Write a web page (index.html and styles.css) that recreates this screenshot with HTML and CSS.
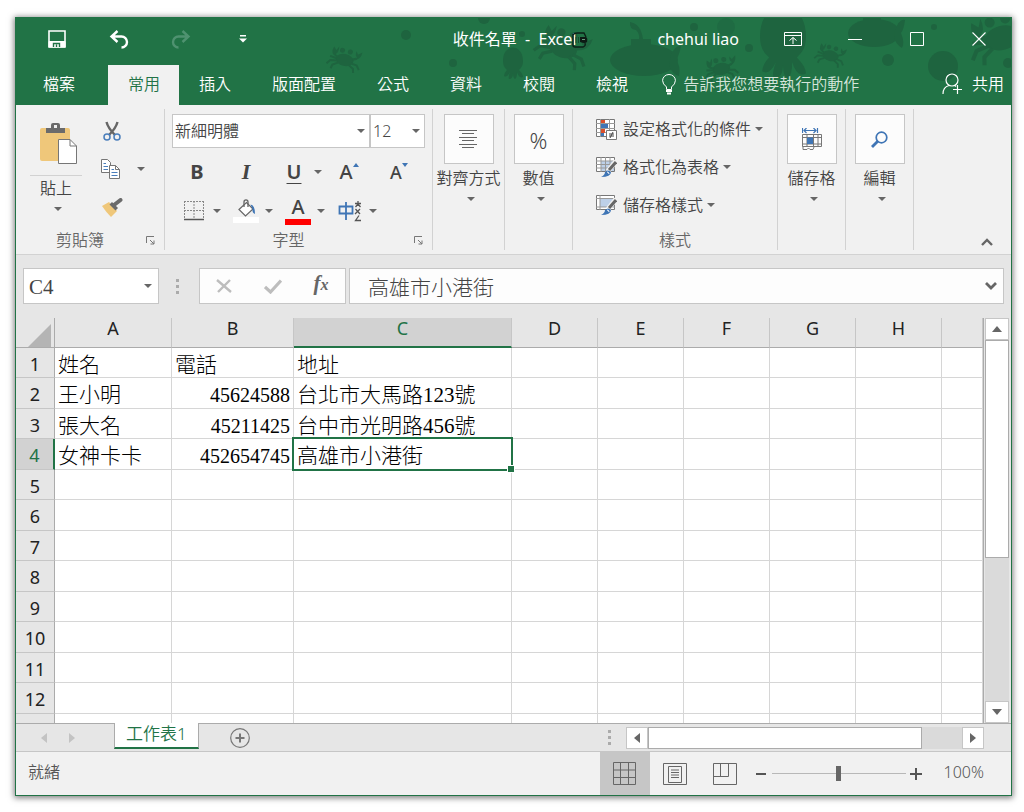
FILE: index.html
```html
<!DOCTYPE html>
<html lang="zh-Hant">
<head>
<meta charset="utf-8">
<meta name="viewport" content="width=device-width, initial-scale=1">
<title>收件名單 - Excel</title>
<link rel="stylesheet" href="styles.css">
</head>
<body>
<div class="window">
  <header class="header">
    <svg class="sea" viewBox="16 18 996 87" width="996" height="87" aria-hidden="true">
      <defs>
        <g id="crab">
          <ellipse cx="0" cy="2" rx="9" ry="6"/>
          <circle cx="-4" cy="-7" r="2.5"/><circle cx="4" cy="-7" r="2.5"/>
          <path d="M-8 1Q-16-1-13-9L-10-6-8-10Q-7-4-10-2L-6 0ZM8 1Q16-1 16-9L12-6 10-9Q9-4 12-3L7-1Z"/>
          <path d="M-7 4-14 5-17 9M-6 6-11 9-12 13M7 4 13 5 16 9M5 6 10 9 11 13M-8 2-15 1" fill="none" stroke="#1e643f" stroke-width="2"/>
        </g>
        <g id="squid">
          <path d="M-10-4C-10-22 10-22 10-4C10 1 8 3 6 5Q10 9 10 12 6 14 4 7Q4 13 2 14 0 13 0 8 0 14-4 14-5 12-3 7-6 13-9 11-9 8-6 5-10 2-10-4Z"/>
        </g>
      </defs>
      <g fill="#1e643f">
        <use href="#crab" transform="translate(346 58) rotate(12)"/>
        <use href="#crab" transform="translate(565 45) rotate(18) scale(1.6)"/>
        <use href="#crab" transform="translate(722 67) rotate(-10)"/>
        <use href="#crab" transform="translate(832 54) rotate(14) scale(.9)"/>
        <use href="#crab" transform="translate(1002 34) rotate(-15) scale(2)"/>
        <use href="#squid" transform="translate(514 65)"/>
        <use href="#squid" transform="translate(784 46) scale(2.3)"/>
        <circle cx="407" cy="35" r="5"/><circle cx="485" cy="18" r="6"/>
        <circle cx="523" cy="34" r="3"/><circle cx="454" cy="63" r="4"/>
        <circle cx="695" cy="27" r="4"/><circle cx="727" cy="27" r="9" opacity=".5"/>
        <circle cx="750" cy="48" r="4"/><circle cx="889" cy="60" r="6"/>
        <circle cx="935" cy="27" r="3"/><circle cx="944" cy="66" r="15"/><circle cx="1009" cy="63" r="5"/>
        <ellipse cx="645" cy="60" rx="34" ry="16"/>
        <path d="M632 46V39H640Q641 34 637 30Q630 29 631 22Q642 24 644 39H652V46ZM672 55Q676 45 682 46 680 56 677 60 682 66 680 76 674 75 670 66Z"/>
        <ellipse cx="875" cy="33" rx="26" ry="14"/>
        <path d="M864 22V18H882V22ZM896 31Q900 18 906 20 905 29 902 33 906 43 903 48 896 44 895 36Z"/>
      </g>
    </svg>

    <div class="titlebar">
      <div class="quick">
        <button class="tb-btn" type="button" aria-label="儲存檔案">
          <svg width="18" height="18" viewBox="0 0 18 18" fill="none" stroke="#fff"><path d="M1 1H17V17H1Z" stroke-width="1.6"/><path d="M1 11.5H17V17H1Z" fill="#fff"/><path d="M5.500 17V13.500H11.500V17M8.500 14.500V17" stroke="#217346" stroke-width="1.400"/></svg>
        </button>
        <button class="tb-btn" type="button" aria-label="復原">
          <svg width="20" height="19" viewBox="0 0 20 19" fill="none" stroke="#fff" stroke-width="2.400"><path d="M8.500 1 2.500 6.500 8.500 12M2.500 6.500H12.500A5.300 5.300 0 0 1 12.500 17.500"/></svg>
        </button>
        <button class="tb-btn" type="button" aria-label="取消復原" disabled>
          <svg width="20" height="19" viewBox="0 0 20 19" fill="none" stroke="#4f9270" stroke-width="2.400"><path d="M11.500 1 17.500 6.500 11.500 12M17.500 6.500H7.500A5.300 5.300 0 0 0 7.500 17.500"/></svg>
        </button>
        <button class="tb-btn" type="button" aria-label="自訂快速存取工具列">
          <svg width="8" height="8" viewBox="0 0 8 8"><path d="M1 0H7V1.500H1ZM0 3.500H8L4 7.500Z" fill="#fff"/></svg>
        </button>
      </div>
      <div class="doc-title">收件名單&nbsp; -&nbsp; Exce<span class="busy">l<svg width="16" height="16" viewBox="0 0 16 16" aria-hidden="true"><path d="M1 2V13Q1 15 3 15H11Q14 14 13 11M1 3Q2 1 5 1H12L14 5" fill="none" stroke="#0d2118" stroke-width="1.4"/><path d="M4 5V11M6.500 5V11" stroke="#174a30"/><path d="M8 5H14Q16 6 15 10 13 12 8 10Z" fill="#0d1a14"/><path d="M10 7.500H13" stroke="#6b9a80"/></svg></span></div>
      <div class="user">chehui liao</div>
      <div class="win-btns">
        <button class="tb-btn" type="button" aria-label="功能區顯示選項">
          <svg width="18" height="14" viewBox="0 0 18 14" fill="none" stroke="#fff"><path d="M.5.5H17.500V13.500H.5ZM.5 3.500H17.500M9 12V5.500M5.500 8.500 9 5.500 12.500 8.500"/></svg>
        </button>
        <button class="tb-btn" type="button" aria-label="最小化">
          <svg width="14" height="14" viewBox="0 0 14 14"><path d="M0 7.500H14" stroke="#fff"/></svg>
        </button>
        <button class="tb-btn" type="button" aria-label="最大化">
          <svg width="14" height="14" viewBox="0 0 14 14"><path d="M.5.5H13.500V13.500H.5Z" fill="none" stroke="#fff"/></svg>
        </button>
        <button class="tb-btn" type="button" aria-label="關閉">
          <svg width="14" height="14" viewBox="0 0 14 14"><path d="M.5.5 13.500 13.500M13.500.5.5 13.500" stroke="#fff" stroke-width="1.100"/></svg>
        </button>
      </div>
    </div>

    <nav class="tabs">
      <button class="tab tab-file" type="button">檔案</button>
      <button class="tab tab-active" type="button">常用</button>
      <button class="tab" type="button">插入</button>
      <button class="tab" type="button">版面配置</button>
      <button class="tab" type="button">公式</button>
      <button class="tab" type="button">資料</button>
      <button class="tab" type="button">校閱</button>
      <button class="tab" type="button">檢視</button>
      <button class="tell" type="button">
        <svg width="14" height="21" viewBox="0 0 14 21" fill="none" stroke="#fff"><path d="M4.500 15.500V13Q.6 10 .6 6.500A6.400 6 0 0 1 13.400 6.500Q13.400 10 9.500 13V15.500Z"/><path d="M4 17H10M5 19.500H9" stroke-width="2"/></svg>
        <span>告訴我您想要執行的動作</span>
      </button>
      <button class="share" type="button">
        <svg width="20" height="22" viewBox="0 0 20 22" fill="none" stroke="#fff" stroke-width="1.200"><circle cx="10" cy="7" r="6"/><path d="M1 21Q1 14 7 12.500M13 12.500 14 13.500M11 16.500H20M15.500 12V21"/></svg>
        <span>共用</span>
      </button>
    </nav>
  </header>

  <section class="ribbon" aria-label="常用">
    <div class="group g-clip">
      <div class="clip-body">
        <button class="paste" type="button">
          <svg width="38" height="42" viewBox="0 0 38 42"><path d="M2 5H28Q30 5 30 7V38H2Q0 38 0 36V7Q0 5 2 5Z" fill="#efc77a"/><path d="M6 5H11V2Q11 0 13 0H18Q20 0 20 2V5H25V10H6Z" fill="#6b6b6b"/><rect x="14" y="2" width="3" height="3" fill="#f1f1f1"/><path d="M18.500 16.500H30L36.500 23V40.500H18.500Z" fill="#fff" stroke="#767676"/><path d="M30 16.500V23H36.500" fill="none" stroke="#767676"/></svg>
          <span class="rule"></span>
          <span>貼上</span>
          <i class="arrow"></i>
        </button>
        <div class="clip-tools">
          <button class="icon-btn" type="button" aria-label="剪下">
            <svg width="18" height="20" viewBox="0 0 18 20" fill="none"><path d="M3.500 1Q5 7 12 14M14.500 1Q13 7 6 14" stroke="#666" stroke-width="2.400"/><circle cx="4" cy="16" r="3" stroke="#4a7ebb" stroke-width="1.500"/><circle cx="14" cy="16" r="3" stroke="#4a7ebb" stroke-width="1.500"/></svg>
          </button>
          <button class="icon-btn" type="button" aria-label="複製">
            <svg width="19" height="20" viewBox="0 0 19 20"><g fill="#fff" stroke="#767676"><path d="M.5.5H6.500L9.500 3.500V13.500H.5Z"/><path d="M8.500 6.500H14.500L18.500 10.500V19.500H8.500Z"/><path d="M14.500 6.500V10.500H18.500" fill="none"/></g><path d="M2.500 4.500H5M2.500 7.500H7M2.500 10.500H7M10.500 10.500H13M10.500 13.500H16.500M10.500 16.500H16.500" stroke="#4a7ebb"/></svg>
          </button>
          <button class="arrow-btn" type="button" aria-label="複製選項"><i class="arrow"></i></button>
          <button class="icon-btn painter" type="button" aria-label="複製格式">
            <svg width="21" height="19" viewBox="0 0 21 19"><path d="M0 8 7 4 15 13 9 19Q4 14 0 8Z" fill="#efc77a"/><path d="M7.500 6.500 10 4 16 10 13.500 12.500Z" fill="#6b6b6b"/><path d="M12 7 18.500 2" stroke="#6b6b6b" stroke-width="4" stroke-linecap="round"/></svg>
          </button>
        </div>
      </div>
      <div class="group-label"><span>剪貼簿</span>
        <button class="launcher" type="button" aria-label="剪貼簿設定"><svg width="9" height="9" viewBox="0 0 9 9" fill="none" stroke="#777"><path d="M.5 7V.5H8M4 4 8 8M8 4.500V8H4.500"/></svg></button>
      </div>
    </div>

    <div class="group g-font">
      <div class="font-row combos">
        <div class="combo combo-name"><select aria-label="字型"><option>新細明體</option></select></div>
        <div class="combo combo-size"><select aria-label="字型大小"><option>12</option></select></div>
      </div>
      <div class="font-row styles-row">
        <button class="glyph bold" type="button" aria-label="粗體">B</button>
        <button class="glyph italic" type="button" aria-label="斜體">I</button>
        <button class="glyph underline" type="button" aria-label="底線">U</button>
        <button class="arrow-btn" type="button" aria-label="底線選項"><i class="arrow"></i></button>
        <button class="glyph grow" type="button" aria-label="放大字型">A<svg width="6" height="4" viewBox="0 0 6 4"><path d="M0 4 3 0 6 4Z" fill="#3f75b5"/></svg></button>
        <button class="glyph shrink" type="button" aria-label="縮小字型">A<svg width="6" height="4" viewBox="0 0 6 4"><path d="M0 0 3 4 6 0Z" fill="#3f75b5"/></svg></button>
      </div>
      <div class="font-row color-row">
        <div class="split">
          <button class="icon-btn" type="button" aria-label="框線"><svg width="20" height="20" viewBox="0 0 20 20" fill="none" stroke="#888"><path d="M.5 0V18M10 0V18M19.500 0V18M0 .5H20M0 9.500H20" stroke-dasharray="2 1"/><path d="M0 18.500H20" stroke="#555" stroke-width="1.500"/></svg></button>
          <button class="arrow-btn" type="button" aria-label="框線選項"><i class="arrow"></i></button>
        </div>
        <div class="split">
          <button class="icon-btn" type="button" aria-label="填滿色彩"><svg width="26" height="24" viewBox="0 0 26 24"><path d="M6 10.500 13.500 3.500 20 10 12.500 17Z" fill="#fff" stroke="#666" stroke-width="1.200"/><path d="M11 8V3Q11 .8 13 .8T15 3V8" fill="none" stroke="#666" stroke-width="1.300"/><path d="M17.500 5.500Q22 6 22 15Q19 14 19.500 10Z" fill="#3f75b5"/><path d="M0 18H26V24H0Z" fill="#fff"/></svg></button>
          <button class="arrow-btn" type="button" aria-label="填滿色彩選項"><i class="arrow"></i></button>
        </div>
        <div class="split">
          <button class="glyph font-color" type="button" aria-label="字型色彩">A</button>
          <button class="arrow-btn" type="button" aria-label="字型色彩選項"><i class="arrow"></i></button>
        </div>
        <div class="split">
          <button class="icon-btn" type="button" aria-label="顯示注音標示"><svg width="24" height="22" viewBox="0 0 24 22" fill="none"><path d="M1.500 6.500H14.500V13.500H1.500ZM8 2V20" stroke="#3f75b5" stroke-width="1.800"/><path d="M17 3.500H23M20 1V6M17.500 7 20 4 22.500 7M17.500 9 22 14M22 9 17 14M21 15.500 17.500 20.500H23" stroke="#555" stroke-width="1.300"/></svg></button>
          <button class="arrow-btn" type="button" aria-label="注音選項"><i class="arrow"></i></button>
        </div>
      </div>
      <div class="group-label"><span>字型</span>
        <button class="launcher" type="button" aria-label="字型設定"><svg width="9" height="9" viewBox="0 0 9 9" fill="none" stroke="#777"><path d="M.5 7V.5H8M4 4 8 8M8 4.500V8H4.500"/></svg></button>
      </div>
    </div>

    <div class="group g-align">
      <button class="big" type="button">
        <span class="tile"><svg width="19" height="20" viewBox="0 0 19 20" stroke="#666"><path d="M0 1.500H18M3 4.500H15M0 8.500H18M3 11.500H15M0 15.500H18M3 18.500H15"/></svg></span>
        <span>對齊方式</span><i class="arrow"></i>
      </button>
    </div>
    <div class="group g-small">
      <button class="big" type="button">
        <span class="tile percent">%</span>
        <span>數值</span><i class="arrow"></i>
      </button>
    </div>

    <div class="group g-styles">
      <div class="style-list">
        <button class="style-item" type="button">
          <svg width="21" height="22" viewBox="0 0 21 22"><path d="M.5 1.500H18.500V18.500H.5Z" fill="#fff" stroke="#777"/><path d="M4.500 1V19M13.500 1V19M0 5.500H19M0 10.500H19M0 14.500H19" stroke="#999" fill="none"/><path d="M5 2H9V5H5ZM5 11H9V15H5Z" fill="#d94f2b"/><path d="M5 6H12V10H5ZM5 15H8V18H5Z" fill="#3f75b5"/><path d="M10.500 12.500H20.500V21.500H10.500Z" fill="#fff" stroke="#777"/><path d="M13 16H18M13 18H18M17 14 14 20" stroke="#444"/></svg>
          <span>設定格式化的條件</span><i class="arrow"></i>
        </button>
        <button class="style-item" type="button">
          <svg width="21" height="22" viewBox="0 0 21 22"><path d="M.5 1.500H18.500V15.500H.5Z" fill="#fff" stroke="#777"/><path d="M5 5H18V15H5Z" fill="#bdd0e8"/><path d="M5 1V16M9.500 1V16M14 1V16M0 5H19M0 8.500H19M0 12H19" stroke="#999"/><path d="M20 5 12 15" stroke="#f1f1f1" stroke-width="5"/><path d="M20 6 13 14" stroke="#666" stroke-width="3"/><path d="M5 21Q9 19 9 16 12 13 15 16 15 21 5 21Z" fill="#3f75b5"/><path d="M11 16Q13 16 13 18" fill="none" stroke="#fff"/></svg>
          <span>格式化為表格</span><i class="arrow"></i>
        </button>
        <button class="style-item" type="button">
          <svg width="21" height="22" viewBox="0 0 21 22"><path d="M.5 1.500H18.500V15.500H.5Z" fill="#fff" stroke="#777"/><path d="M4 5H18V13H4Z" fill="#bdd0e8"/><path d="M4 1V16M0 4.500H19M0 13H19" stroke="#999"/><path d="M20 5 12 15" stroke="#f1f1f1" stroke-width="5"/><path d="M20 6 13 14" stroke="#666" stroke-width="3"/><path d="M5 21Q9 19 9 16 12 13 15 16 15 21 5 21Z" fill="#3f75b5"/><path d="M11 16Q13 16 13 18" fill="none" stroke="#fff"/></svg>
          <span>儲存格樣式</span><i class="arrow"></i>
        </button>
      </div>
      <div class="group-label plain"><span>樣式</span></div>
    </div>

    <div class="group g-small">
      <button class="big" type="button">
        <span class="tile"><svg width="20" height="22" viewBox="0 0 20 22" fill="none"><path d="M.5 0V5M15.500 0V5M2 2.500H14M4.500 0 2 2.500 4.500 5M11.500 0 14 2.500 11.500 5" stroke="#3f75b5" stroke-width="1.200"/><path d="M.5 6.500H19.500V18.500H.5ZM5 6V18M11.500 6V18M16 6V18M0 9.500H20M0 16H20M1 18V21.500H5L6.500 20 8 21.500H11L12 19" stroke="#777"/><path d="M5 9.500H11V16H5Z" fill="#3f75b5"/></svg></span>
        <span>儲存格</span><i class="arrow"></i>
      </button>
    </div>
    <div class="group g-small">
      <button class="big" type="button">
        <span class="tile"><svg width="17" height="17" viewBox="0 0 17 17" fill="none" stroke="#3f75b5"><circle cx="10.500" cy="6.500" r="5.300" stroke-width="1.700"/><path d="M7 10 1 16" stroke-width="2.800"/></svg></span>
        <span>編輯</span><i class="arrow"></i>
      </button>
    </div>
    <button class="collapse" type="button" aria-label="摺疊功能區"><svg width="12" height="8" viewBox="0 0 12 8"><path d="M1 7 6 2 11 7" fill="none" stroke="#666" stroke-width="2.400"/></svg></button>
  </section>

  <section class="formula-bar">
    <div class="combo namebox"><input type="text" value="C4" aria-label="名稱方塊"></div>
    <svg class="dots" width="3" height="15" viewBox="0 0 3 15" aria-hidden="true"><path d="M0 0H3V3H0ZM0 6H3V9H0ZM0 12H3V15H0Z" fill="#ababab"/></svg>
    <div class="fx-box">
      <button class="icon-btn" type="button" aria-label="取消"><svg width="16" height="14" viewBox="0 0 16 14"><path d="M1 1 15 13M14 1 2 13" stroke="#bdbdbd" stroke-width="2.400"/></svg></button>
      <button class="icon-btn" type="button" aria-label="輸入"><svg width="18" height="15" viewBox="0 0 18 15"><path d="M1 8 6.500 13 17 1.500" fill="none" stroke="#bdbdbd" stroke-width="3.200"/></svg></button>
      <button class="icon-btn fx" type="button" aria-label="插入函數">f<small>x</small></button>
    </div>
    <div class="formula">
      <input type="text" value="高雄市小港街" aria-label="資料編輯列">
      <button class="icon-btn" type="button" aria-label="展開資料編輯列"><svg width="12" height="8" viewBox="0 0 12 8"><path d="M1 1 6 6 11 1" fill="none" stroke="#666" stroke-width="2.800"/></svg></button>
    </div>
  </section>

  <main class="sheet">
    <table class="grid">
      <colgroup><col class="c-head"><col class="c-a"><col class="c-b"><col class="c-c"><col class="c-d"><col class="c-d"><col class="c-d"><col class="c-d"><col class="c-d"><col></colgroup>
      <thead>
        <tr><th class="corner"><svg width="23" height="23" viewBox="0 0 23 23" aria-hidden="true"><path d="M23 0V23H0Z" fill="#b4b4b4"/></svg></th><th>A</th><th>B</th><th class="on">C</th><th>D</th><th>E</th><th>F</th><th>G</th><th>H</th><th></th></tr>
      </thead>
      <tbody>
        <tr><th>1</th><td>姓名</td><td>電話</td><td>地址</td><td></td><td></td><td></td><td></td><td></td><td></td></tr>
        <tr><th>2</th><td>王小明</td><td class="num">45624588</td><td>台北市大馬路123號</td><td></td><td></td><td></td><td></td><td></td><td></td></tr>
        <tr><th>3</th><td>張大名</td><td class="num">45211425</td><td>台中市光明路456號</td><td></td><td></td><td></td><td></td><td></td><td></td></tr>
        <tr><th class="on">4</th><td>女神卡卡</td><td class="num">452654745</td><td class="selected">高雄市小港街</td><td></td><td></td><td></td><td></td><td></td><td></td></tr>
        <tr><th>5</th><td></td><td></td><td></td><td></td><td></td><td></td><td></td><td></td><td></td></tr>
        <tr><th>6</th><td></td><td></td><td></td><td></td><td></td><td></td><td></td><td></td><td></td></tr>
        <tr><th>7</th><td></td><td></td><td></td><td></td><td></td><td></td><td></td><td></td><td></td></tr>
        <tr><th>8</th><td></td><td></td><td></td><td></td><td></td><td></td><td></td><td></td><td></td></tr>
        <tr><th>9</th><td></td><td></td><td></td><td></td><td></td><td></td><td></td><td></td><td></td></tr>
        <tr><th>10</th><td></td><td></td><td></td><td></td><td></td><td></td><td></td><td></td><td></td></tr>
        <tr><th>11</th><td></td><td></td><td></td><td></td><td></td><td></td><td></td><td></td><td></td></tr>
        <tr><th>12</th><td></td><td></td><td></td><td></td><td></td><td></td><td></td><td></td><td></td></tr>
        <tr class="cut"><th></th><td></td><td></td><td></td><td></td><td></td><td></td><td></td><td></td><td></td></tr>
      </tbody>
    </table>
    <div class="vscroll">
      <button class="scroll-btn" type="button" aria-label="向上捲動"><svg width="10" height="6" viewBox="0 0 10 6"><path d="M0 6 5 0 10 6Z" fill="#666"/></svg></button>
      <div class="vthumb"></div>
      <div class="track"></div>
      <button class="scroll-btn" type="button" aria-label="向下捲動"><svg width="10" height="6" viewBox="0 0 10 6"><path d="M0 0 5 6 10 0Z" fill="#666"/></svg></button>
    </div>
  </main>

  <section class="sheet-bar">
    <button class="sheet-nav" type="button" aria-label="上一張" disabled><svg width="6" height="10" viewBox="0 0 6 10"><path d="M6 0V10L0 5Z" fill="#c3c3c3"/></svg></button>
    <button class="sheet-nav" type="button" aria-label="下一張" disabled><svg width="6" height="10" viewBox="0 0 6 10"><path d="M0 0V10L6 5Z" fill="#c3c3c3"/></svg></button>
    <button class="sheet-tab" type="button">工作表1</button>
    <button class="add-sheet" type="button" aria-label="新增工作表"><svg width="20" height="20" viewBox="0 0 20 20" fill="none" stroke="#777"><circle cx="10" cy="10" r="9.300" stroke-width="1.200"/><path d="M5.500 10H14.500M10 5.500V14.500" stroke-width="2"/></svg></button>
    <svg class="dots hdots" width="3" height="15" viewBox="0 0 3 15" aria-hidden="true"><path d="M0 0H3V3H0ZM0 6H3V9H0ZM0 12H3V15H0Z" fill="#ababab"/></svg>
    <div class="hscroll">
      <button class="scroll-btn" type="button" aria-label="向左捲動"><svg width="6" height="10" viewBox="0 0 6 10"><path d="M6 0V10L0 5Z" fill="#666"/></svg></button>
      <div class="hthumb"></div>
      <div class="track"></div>
      <button class="scroll-btn" type="button" aria-label="向右捲動"><svg width="6" height="10" viewBox="0 0 6 10"><path d="M0 0V10L6 5Z" fill="#666"/></svg></button>
    </div>
  </section>

  <footer class="status">
    <span class="ready">就緒</span>
    <button class="view view-on" type="button" aria-label="標準模式"><svg width="23" height="23" viewBox="0 0 23 23"><path d="M.5.5H22.500V22.500H.5ZM7.500 0V23M15.500 0V23M0 8H23M0 15.500H23" fill="none" stroke="#666"/></svg></button>
    <button class="view" type="button" aria-label="整頁模式"><svg width="24" height="22" viewBox="0 0 24 22" fill="none" stroke="#666"><path d="M.5.5H23.500V21.500H.5ZM5.500 3.500H18.500V19.500H5.500ZM8 7H16M8 9.500H16M8 12H16M8 14.500H16"/></svg></button>
    <button class="view" type="button" aria-label="分頁預覽"><svg width="24" height="22" viewBox="0 0 24 22" fill="none" stroke="#666"><path d="M.5.5H23.500V21.500H.5ZM7.500 0V13.500M15.500 0V13.500H0"/></svg></button>
    <div class="zoom">
      <button class="icon-btn" type="button" aria-label="縮小"><svg width="12" height="12" viewBox="0 0 12 12"><path d="M1 6H11" stroke="#555" stroke-width="2"/></svg></button>
      <input class="slider" type="range" min="0" max="100" value="50" aria-label="顯示比例">
      <button class="icon-btn" type="button" aria-label="放大"><svg width="12" height="12" viewBox="0 0 12 12"><path d="M0 6H12M6 0V12" stroke="#555" stroke-width="2"/></svg></button>
    </div>
    <span class="percent-text">100%</span>
  </footer>
</div>
</body>
</html>
```

FILE: styles.css
```css
* { box-sizing: border-box; }

body {
  margin: 0;
  padding: 17px 12px 17px 15px;
  background: #fff;
  color: #444;
  font: 350 16px/20px "Noto Sans", "Noto Sans CJK TC", sans-serif;
}

button, input, select {
  margin: 0;
  padding: 0;
  border: 0;
  background: none;
  color: inherit;
  font: inherit;
}

button { display: flex; align-items: center; justify-content: center; }
svg { display: block; flex: none; }

.window {
  border: 1px solid #217346;
  background: #e6e6e6;
  box-shadow: 0 1px 6px 1px rgba(0, 0, 0, .5);
}

/* Title bar and tabs */
.header { position: relative; overflow: hidden; background: #217346; color: #fff; }
.sea { position: absolute; top: 0; right: 0; }
.titlebar { position: relative; display: flex; align-items: center; height: 44px; padding: 0 1px 2px 10px; }
.quick, .win-btns { display: flex; }
.tb-btn { width: 62px; height: 42px; }
.doc-title, .user { font-weight: 400; white-space: nowrap; }
.doc-title { flex: 1; margin-right: 81px; text-align: right; }
.busy { position: relative; }
.busy svg { position: absolute; left: 0; top: 4px; }
.user { margin-right: 23px; }

.tabs { position: relative; display: flex; height: 40px; margin-top: 3px; white-space: nowrap; }
.tab { padding: 0 21px 2px 20px; }
.tab-file { padding: 0 33px 2px 27px; }
.tab-active { padding: 0 19px 2px 20px; background: #f1f1f1; color: #217346; }
.tell { gap: 7px; padding: 0 0 2px 13px; color: #d5e5db; }
.share { gap: 10px; margin-left: auto; padding: 0 7px 2px 0; }

/* Ribbon */
.ribbon { display: flex; height: 150px; padding: 4px 0; background: #f1f1f1; border-bottom: 1px solid #d2d2d2; }
.group { display: flex; flex: none; flex-direction: column; border-right: 1px solid #d2d2d2; }
.g-clip { width: 149px; }
.g-font { width: 268px; }
.g-align { width: 72px; }
.g-small { width: 68px; }
.g-styles { width: 205px; }
.group-label { display: flex; align-items: center; height: 20px; margin-top: auto; color: #666; }
.group-label span { flex: 1; text-align: center; }
.launcher { width: 20px; height: 14px; padding-right: 8px; }

.arrow { border: 4px solid transparent; border-top-color: #666; border-bottom: 0; flex: none; }
.arrow-btn { width: 20px; height: 30px; }
.icon-btn { min-width: 26px; height: 30px; }

.clip-body { display: flex; }
.paste { flex-direction: column; justify-content: flex-start; width: 52px; margin-left: 14px; padding: 14px 0 0; }
.paste svg { margin-left: 6px; }
.rule { width: 52px; height: 1px; margin: 10px 0 2px; background: #d2d2d2; }
.paste .arrow { margin: 9px 0 0 4px; }
.clip-tools {
  display: grid;
  grid-template: repeat(3, 38px) / 26px 20px;
  align-items: center;
  column-gap: 8px;
  margin: 3px 0 0 15px;
}
.clip-tools .icon-btn:first-child { grid-column: span 2; justify-self: start; padding-left: 4px; }
.painter { padding-left: 4px; }

.font-row { display: flex; align-items: center; height: 39px; padding-left: 16px; }
.combos { height: 43px; padding-left: 7px; }
.combo { position: relative; background: #fff; border: 1px solid #c6c6c6; }
.combo::after {
  content: "";
  position: absolute;
  right: 4px;
  top: 50%;
  margin-top: -2px;
  border: 4px solid transparent;
  border-top-color: #666;
  border-bottom: 0;
  pointer-events: none;
}
.combo select, .combo input { width: 100%; height: 32px; padding-left: 2px; appearance: none; outline: 0; }
.combo-name { width: 198px; }
.combo-size { width: 55px; }
.styles-row { display: grid; grid-template-columns: 48px 50px 40px 14px 48px 52px; padding-left: 8px; }
.styles-row .arrow-btn { width: 14px; }
.glyph { position: relative; height: 30px; font-size: 20px; font-weight: 600; }
.bold { font-weight: 700; }
.italic { font-family: "Liberation Serif", serif; font-style: italic; font-weight: 700; font-size: 22px; }
.underline { padding-left: 6px; text-decoration: underline; text-underline-offset: 4px; text-decoration-thickness: 1px; }
.grow, .shrink { font-weight: 500; }
.shrink { font-size: 18px; }
.grow svg, .shrink svg { align-self: flex-start; margin-top: 6px; }
.color-row { gap: 6px; }
.split { display: flex; align-items: center; }
.font-color { width: 26px; height: 28px; padding-bottom: 2px; border-bottom: 6px solid #f00; font-weight: 500; }

.big { flex-direction: column; padding-top: 5px; white-space: nowrap; }
.tile { display: flex; align-items: center; justify-content: center; width: 50px; height: 50px; margin-bottom: 4px; border: 1px solid #c6c6c6; background: #fcfcfc; }
.percent { padding-top: 2px; font-size: 22px; }
.big .arrow { margin: 9px 0 0 4px; }

.style-list { padding: 1px 0 0 23px; }
.style-item { gap: 6px; height: 38px; white-space: nowrap; }
.style-item .arrow { margin-left: -2px; }
.collapse { align-self: flex-end; width: 26px; height: 16px; margin: 0 11px 0 auto; }

/* Formula bar */
.formula-bar { display: flex; align-items: center; height: 63px; padding: 0 7px 1px; font: 300 21px/24px "Liberation Serif", "Noto Sans CJK TC", serif; }
.namebox { width: 136px; }
.namebox input { height: 34px; padding: 3px 0 0 5px; }
.namebox::after { right: 6px; }
.dots { margin: 0 20px 0 17px; }
.fx-box { display: flex; align-items: center; justify-content: space-between; width: 147px; height: 36px; padding: 0 11px; border: 1px solid #c6c6c6; background: #fdfdfd; }
.fx { align-items: baseline; font-weight: 700; font-style: italic; color: #666; }
.fx small { font-size: 16px; }
.formula { display: flex; flex: 1; align-items: center; height: 36px; margin-left: 3px; border: 1px solid #c6c6c6; background: #fdfdfd; }
.formula input { flex: 1; min-width: 0; height: 34px; padding-left: 18px; outline: 0; }
.formula .icon-btn { min-width: 24px; }

/* Worksheet */
.sheet { display: flex; padding-right: 2px; }
.grid { flex: 1; min-width: 0; table-layout: fixed; border-collapse: separate; border-spacing: 0; background: #fff; border-right: 1px solid #ababab; }
.c-head { width: 39px; }
.c-a { width: 117px; }
.c-b { width: 122px; }
.c-c { width: 218px; }
.c-d { width: 86px; }
.grid th { padding: 0; background: #e6e6e6; border-right: 1px solid #ababab; border-bottom: 1px solid #c6c6c6; color: #222; font-size: 18px; font-weight: 400; }
.grid thead th { height: 30px; padding-bottom: 9px; border-right-color: #c6c6c6; border-bottom-color: #ababab; }
.grid thead .corner { padding: 5px 3px 0 12px; border-right-color: #ababab; }
.grid tbody th { padding-top: 2px; }
.grid th.on { background: #d2d2d2; color: #217346; }
.grid thead th.on { padding-bottom: 8px; border-bottom: 2px solid #217346; }
.grid tbody th.on { border-right: 2px solid #217346; }
.grid td {
  padding: 4px 3px 0;
  border-right: 1px solid #d6d6d6;
  border-bottom: 1px solid #d6d6d6;
  color: #000;
  font: 300 21px/24px "Liberation Serif", "Noto Sans CJK TC", serif;
  white-space: nowrap;
}
.grid tbody tr { height: 30px; }
.grid tbody tr:nth-child(even) { height: 31px; }
.grid tbody tr.cut { height: 9px; }
.grid .cut th, .grid .cut td { padding: 0; border-bottom: 0; line-height: 0; }
.grid td.num { font-size: 20px; text-align: right; }
.grid td.selected { position: relative; }
.selected::before { content: ""; position: absolute; inset: -2px; border: 2px solid #217346; }
.selected::after { content: ""; position: absolute; right: -3px; bottom: -3px; width: 6px; height: 6px; background: #217346; outline: 1px solid #fff; }

.vscroll { display: flex; flex-direction: column; width: 24px; margin-left: 1px; }
.scroll-btn { flex: none; width: 22px; height: 22px; border: 1px solid #c6c6c6; background: #fff; }
.vscroll .scroll-btn { width: 24px; }
.vthumb { flex: 217; border: 1px solid #ababab; background: #fff; }
.track { background: #dadada; }
.vscroll .track { flex: 144; }

/* Sheet tabs */
.sheet-bar { display: flex; align-items: center; height: 29px; padding-right: 27px; border-top: 1px solid #ababab; border-bottom: 1px solid #c6c6c6; }
.sheet-nav { width: 28px; height: 28px; }
.sheet-nav:first-child { margin-left: 14px; }
.sheet-tab { align-self: flex-start; height: 26px; margin: -1px 0 0 28px; padding: 0 11px 2px; border: 1px solid #ababab; border-top: 0; border-bottom: 2px solid #217346; background: #fff; color: #217346; font-size: 17px; }
.add-sheet { margin-left: 31px; }
.hdots { margin: 0 15px 0 auto; }
.hscroll { display: flex; width: 37%; height: 22px; }
.hthumb { flex: 276; border: 1px solid #ababab; background: #fff; }
.hscroll .track { flex: 40; }

/* Status bar */
.status { display: flex; align-items: center; height: 43px; padding-right: 27px; background: #f1f1f1; color: #555; }
.ready, .percent-text { padding-bottom: 3px; }
.ready { margin: 0 auto 0 12px; }
.view { width: 50px; height: 43px; }
.view-on { background: #c6c6c6; }
.zoom { display: flex; align-items: center; margin: 0 15px 0 -2px; }
.slider { appearance: none; width: 134px; height: 16px; margin: 0 -3px 0 -2px; background: linear-gradient(#b8b8b8, #b8b8b8) center / 100% 1px no-repeat; }
.slider::-webkit-slider-thumb { appearance: none; width: 5px; height: 15px; background: #666; }
```
